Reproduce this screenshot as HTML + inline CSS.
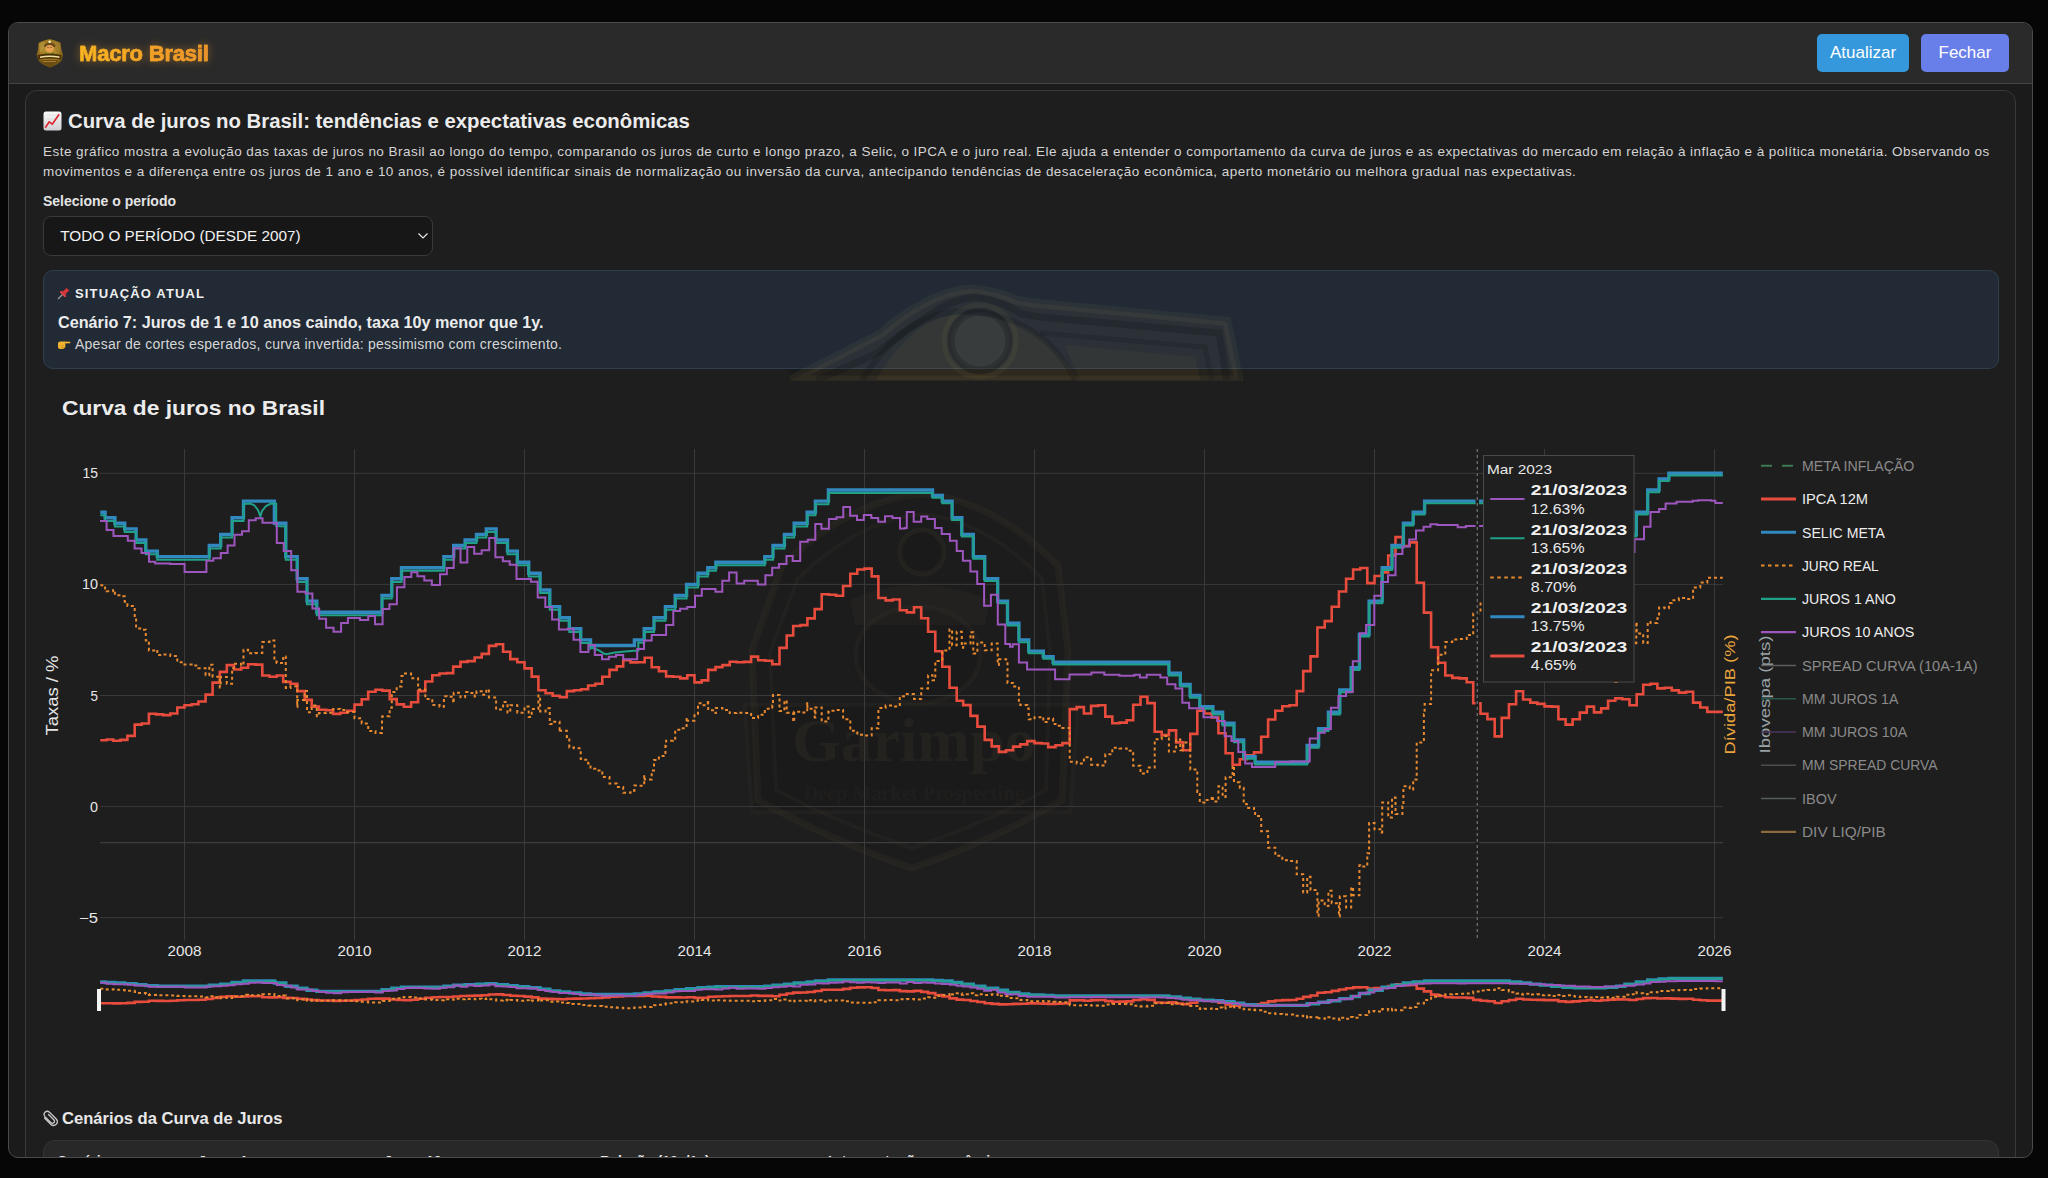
<!DOCTYPE html>
<html><head><meta charset="utf-8"><style>
*{box-sizing:border-box;margin:0;padding:0}
html,body{width:2048px;height:1178px;overflow:hidden;background:#060606;font-family:"Liberation Sans",sans-serif}
.win{position:absolute;left:8px;top:22px;width:2025px;height:1136px;border:1px solid #4a4a4a;border-radius:10px;background:#1b1b1b;overflow:hidden}
.hdr{position:absolute;left:0;top:0;width:2023px;height:61px;background:#2a2a2a;border-bottom:1px solid #444}
.logo{position:absolute;left:27px;top:16px;width:28px;height:30px}
.brand{position:absolute;left:70px;top:17px;font-size:22px;letter-spacing:-0.2px;font-weight:700;line-height:28px;-webkit-text-stroke:0.5px #f0a228;white-space:nowrap;color:#f1a72a;background:linear-gradient(90deg,#f7b820,#ec8f2c);-webkit-background-clip:text;background-clip:text;-webkit-text-fill-color:transparent;filter:drop-shadow(0 0 4px rgba(240,160,40,.45))}
.btn{position:absolute;top:11px;height:38px;border-radius:5px;color:#fff;font-size:17px;line-height:38px;text-align:center;white-space:nowrap}
.b1{left:1808px;width:92px;background:#3598dc}
.b2{left:1912px;width:88px;background:#687ee9}
.card{position:absolute;left:16px;top:67px;width:1991px;height:1200px;border:1px solid #393939;border-radius:12px;background:#1e1e1e}
.abs{position:absolute;white-space:nowrap}
.h1{left:43px;top:109px;font-size:20.35px;font-weight:700;color:#ececec;line-height:24px}
.p{left:43px;top:142px;font-size:13.5px;color:#d4d4d4;line-height:20px;letter-spacing:0.46px}
.lab{left:43px;top:192px;font-size:14px;font-weight:700;color:#e4e4e4;line-height:18px}
.sel{left:43px;top:216px;width:390px;height:40px;border:1px solid #3a3a3a;border-radius:8px;background:#171717}
.seltxt{left:60.3px;top:226.7px;font-size:15.3px;color:#f2f2f2;line-height:18px}
.sit{left:42.5px;top:269.5px;width:1956px;height:99px;border:1px solid #2f3e4d;border-radius:10px;background:#212a35;overflow:hidden}
.s1{left:57px;top:284.6px;font-size:13px;font-weight:700;color:#f0f0f0;letter-spacing:1.15px;line-height:18px}
.s2{left:58px;top:312px;font-size:16.2px;font-weight:700;color:#ececec;line-height:20px}
.s3{left:57px;top:335.4px;font-size:14px;color:#d6d6d6;letter-spacing:0.25px;line-height:18px}
.cen{left:42px;top:1108.7px;font-size:16.6px;font-weight:700;color:#e8e8e8;line-height:20px}
.tbl{left:42.5px;top:1140px;width:1956px;height:200px;border:1px solid #343434;border-radius:12px;background:#282828}
.th{top:1152px;font-size:14px;font-weight:700;color:#e8e8e8;line-height:18px}
</style></head><body>
<div class="win">
 <div class="hdr">
  <svg style="position:absolute;left:23px;top:13px" width="36" height="36" viewBox="32 36 36 36">
   <defs><radialGradient id="lg" cx="0.5" cy="0.4" r="0.65"><stop offset="0" stop-color="#d0a034"/><stop offset="0.7" stop-color="#8c6a1c"/><stop offset="1" stop-color="#4e3a10"/></radialGradient></defs>
   <path d="M49.5 39 L55 40.5 L60.5 42.5 L61.5 50 L63 55 L61.5 61 L57 64.5 L50 67.8 L43 64.5 L38.5 61 L36.5 55 L38 50 L38.5 42.5 L44 40.5 Z" fill="url(#lg)"/>
   <path d="M39 44 Q42 41 45 42 L44 50 L40 53 Z" fill="#b89a40" opacity="0.7"/>
   <path d="M60 44 Q57 41 54 42 L55 50 L59 53 Z" fill="#a08030" opacity="0.7"/>
   <path d="M44 45 Q49.5 39.5 55.5 45 L55 47 L44.5 47 Z" fill="#6a4a18"/>
   <circle cx="49.7" cy="41.8" r="1.3" fill="#fff4c8"/>
   <ellipse cx="49.5" cy="48.5" rx="4.2" ry="3.6" fill="#e8a052"/>
   <circle cx="48" cy="47.6" r="0.5" fill="#3a1a08"/><circle cx="51" cy="47.6" r="0.5" fill="#3a1a08"/>
   <path d="M45 52 Q49.5 55 54 52 L54 54.5 L45 54.5 Z" fill="#5a7a28"/>
   <path d="M37.5 55 Q49.5 52.5 61.5 55 L61 59.5 Q49.5 57.5 38 59.5 Z" fill="#4a3008"/>
   <path d="M40 57.2 Q49.5 55.2 59.5 57.2" stroke="#f4e0a0" stroke-width="1.6" fill="none"/>
   <path d="M40.5 60.5 Q49.5 59 58.5 60.5 L56 64 L50 66.5 L44 64 Z" fill="#6a4c14"/>
   <path d="M43 61.5 H56" stroke="#c8a048" stroke-width="0.6"/>
  </svg>
  <div class="brand">Macro Brasil</div>
  <div class="btn b1">Atualizar</div>
  <div class="btn b2">Fechar</div>
 </div>
</div>
<div style="position:absolute;left:0;top:0;width:2048px;height:1158px;overflow:hidden">
<div style="position:absolute;left:9px;top:23px;width:2023px;height:1134px;overflow:hidden;border-radius:0 0 9px 9px">
 <div class="card" style="left:16px;top:67px"></div>
</div>
</div>
<div class="abs h1"><span style="display:inline-block;width:19px;height:20px;vertical-align:-3px;margin-right:6px;position:relative"><svg width="19" height="20" viewBox="0 0 19 20" style="position:absolute;left:0;top:0"><defs><linearGradient id="eg" x1="0" y1="0" x2="0" y2="1"><stop offset="0" stop-color="#fbfbfb"/><stop offset="1" stop-color="#cfcfd4"/></linearGradient></defs><rect x="0.5" y="0.5" width="18" height="19" rx="2.5" fill="url(#eg)"/><path d="M3 4H16M3 8H16M3 12H16M3 16H16" stroke="#dadade" stroke-width="0.6"/><path d="M2.2 16.8 L6.3 10.8 L9.2 13.2 L16.2 3.2" stroke="#de2a30" stroke-width="1.7" fill="none" stroke-linejoin="round"/></svg></span>Curva de juros no Brasil: tendências e expectativas econômicas</div>
<div class="abs p">Este gráfico mostra a evolução das taxas de juros no Brasil ao longo do tempo, comparando os juros de curto e longo prazo, a Selic, o IPCA e o juro real. Ele ajuda a entender o comportamento da curva de juros e as expectativas do mercado em relação à inflação e à política monetária. Observando os<br>movimentos e a diferença entre os juros de 1 ano e 10 anos, é possível identificar sinais de normalização ou inversão da curva, antecipando tendências de desaceleração econômica, aperto monetário ou melhora gradual nas expectativas.</div>
<div class="abs lab">Selecione o período</div>
<div class="abs sel"><svg width="12" height="8" viewBox="0 0 12 8" style="position:absolute;right:3.2px;top:15px"><path d="M1.5 1.5 L6 6 L10.5 1.5" stroke="#e8e8e8" stroke-width="1.2" fill="none"/></svg></div>
<div class="abs seltxt">TODO O PERÍODO (DESDE 2007)</div>
<div class="abs sit"></div>
<svg width="480" height="112" viewBox="780 269 480 112" style="position:absolute;left:780px;top:269px">
 <path d="M789 369 L1241 369 L1241 380 L789 380 Z" fill="rgba(0,0,0,0.1)"/>
 <path d="M791 380 L882 333 Q900 316 923 304 Q948 290 972 289 Q996 291 1016 300 L1028 302.5 L1227 321.5 L1239 380 Z" fill="rgba(200,165,90,0.06)" stroke="rgba(205,180,110,0.065)" stroke-width="9"/>
 <path d="M817 380 L876 354 Q900 334 928 316 Q950 300 975 297 Q1000 300 1022 314 L1040 317 L1219 333 L1227 380" fill="none" stroke="rgba(10,15,20,0.22)" stroke-width="7"/>
 <path d="M876 380 Q905 330 940 318 Q980 306 1030 330 Q1060 350 1080 380 Z" fill="rgba(210,150,60,0.06)"/>
 <path d="M862 380 Q900 320 950 312 Q1010 308 1050 345 Q1065 360 1075 380" fill="none" stroke="rgba(10,15,20,0.2)" stroke-width="6"/>
 <path d="M1040 333 L1205 347 L1212 380" fill="none" stroke="rgba(10,15,20,0.15)" stroke-width="5"/>
 <path d="M1065 345 L1195 357 L1200 380 L1080 380 Z" fill="rgba(210,150,60,0.05)"/>
 <circle cx="980" cy="341" r="36" fill="none" stroke="rgba(205,180,110,0.06)" stroke-width="5"/>
 <circle cx="980" cy="341" r="29" fill="rgba(110,130,150,0.08)" stroke="rgba(10,15,20,0.22)" stroke-width="7"/>
</svg>
<div class="abs s1"><span style="display:inline-block;width:14px;height:14px;margin-right:4px;vertical-align:-2px;letter-spacing:0"><svg width="14" height="14" viewBox="0 0 14 14"><path d="M1 13 L6 8" stroke="#9a9a9a" stroke-width="1.2"/><path d="M5 5.5 L8.5 9 L9.5 7 L11.5 5 L12.8 5.2 L8.8 1.2 L9 2.5 L7 4.5 Z" fill="#d8343a"/><path d="M4 6 L8 10" stroke="#e04048" stroke-width="2.2" stroke-linecap="round"/></svg></span>SITUAÇÃO ATUAL</div>
<div class="abs s2">Cenário 7: Juros de 1 e 10 anos caindo, taxa 10y menor que 1y.</div>
<div class="abs s3"><span style="display:inline-block;width:14px;height:11px;margin-right:4px;vertical-align:-1px"><svg width="14" height="11" viewBox="0 0 14 11"><path d="M1 4.5 Q1 2.5 3.5 2.5 L7 2.5 L13 2.8 Q14 3.5 13 4.3 L8 4.5 L8.5 6 Q8.5 10 5 10 L3 10 Q1 10 1 8 Z" fill="#f2b630"/><path d="M3.5 6.5 L7.5 6.5 M3.5 8.5 L7 8.5" stroke="#c98a1a" stroke-width="0.7"/></svg></span>Apesar de cortes esperados, curva invertida: pessimismo com crescimento.</div>
<svg id="chart" width="2048" height="1178" viewBox="0 0 2048 1178" style="position:absolute;left:0;top:0">
<g fill="none">
 <path d="M782 566 Q850 500 922 494 Q994 500 1058 566 L1068 650 L1062 800 Q990 842 912 868 Q834 842 758 800 L752 650 Z" fill="rgba(0,0,0,0.06)" stroke="rgba(210,180,120,0.045)" stroke-width="7"/>
 <path d="M798 578 Q860 520 922 514 Q984 520 1042 578 L1050 652 L1046 790 Q984 824 912 848 Q840 824 776 790 L770 652 Z" fill="none" stroke="rgba(210,180,120,0.03)" stroke-width="4"/>
 <circle cx="922" cy="552" r="22" fill="rgba(0,0,0,0.05)" stroke="rgba(210,180,120,0.05)" stroke-width="5"/>
 <path d="M850 600 Q915 570 990 600 L985 625 L855 625 Z" fill="rgba(210,180,120,0.03)"/>
 <ellipse cx="918" cy="655" rx="62" ry="48" fill="rgba(0,0,0,0.05)" stroke="rgba(210,180,120,0.035)" stroke-width="5"/>
 <path d="M745 705 L1078 705 L1070 812 L752 812 Z" fill="rgba(0,0,0,0.04)" stroke="rgba(210,180,120,0.035)" stroke-width="4"/>
 <text x="914" y="761" text-anchor="middle" style="font-family:'Liberation Serif',serif;font-weight:700;font-size:62px;fill:rgba(215,185,125,0.055)" textLength="244" lengthAdjust="spacingAndGlyphs">Garimpo</text>
 <text x="914" y="800" text-anchor="middle" style="font-family:'Liberation Serif',serif;font-weight:700;font-size:21px;fill:rgba(215,185,125,0.05)" textLength="221" lengthAdjust="spacingAndGlyphs">Deep Market Prospecting</text>
</g>
<line x1="184.5" y1="449" x2="184.5" y2="940.5" stroke="#3a3a3a" stroke-width="1"/>
<line x1="354.5" y1="449" x2="354.5" y2="940.5" stroke="#3a3a3a" stroke-width="1"/>
<line x1="524.5" y1="449" x2="524.5" y2="940.5" stroke="#3a3a3a" stroke-width="1"/>
<line x1="694.5" y1="449" x2="694.5" y2="940.5" stroke="#3a3a3a" stroke-width="1"/>
<line x1="864.5" y1="449" x2="864.5" y2="940.5" stroke="#3a3a3a" stroke-width="1"/>
<line x1="1034.5" y1="449" x2="1034.5" y2="940.5" stroke="#3a3a3a" stroke-width="1"/>
<line x1="1204.5" y1="449" x2="1204.5" y2="940.5" stroke="#3a3a3a" stroke-width="1"/>
<line x1="1374.5" y1="449" x2="1374.5" y2="940.5" stroke="#3a3a3a" stroke-width="1"/>
<line x1="1544.5" y1="449" x2="1544.5" y2="940.5" stroke="#3a3a3a" stroke-width="1"/>
<line x1="1714.5" y1="449" x2="1714.5" y2="940.5" stroke="#3a3a3a" stroke-width="1"/>
<line x1="100" y1="473.3" x2="1723" y2="473.3" stroke="#3a3a3a" stroke-width="1"/>
<line x1="100" y1="584.4" x2="1723" y2="584.4" stroke="#3a3a3a" stroke-width="1"/>
<line x1="100" y1="695.5" x2="1723" y2="695.5" stroke="#3a3a3a" stroke-width="1"/>
<line x1="100" y1="806.6" x2="1723" y2="806.6" stroke="#3a3a3a" stroke-width="1"/>
<line x1="100" y1="917.7" x2="1723" y2="917.7" stroke="#3a3a3a" stroke-width="1"/>
<line x1="100" y1="842.7" x2="1723" y2="842.7" stroke="#444" stroke-width="1"/>
<g><path d="M100.3 740.2H106.7 V739.5H113.2 V740.8H120.5 V739.9H127.4 V735.9H134.7 V724.6H141.7 V723.5H148.9 V713.7H156.1 V714.4H163.1 V715.1H170.3 V713.5H177.3 V707.5H184.5 V705.3H191.7 V704.2H198.4 V701.5H205.6 V694.6H212.6 V682.6H219.8 V671.9H226.8 V665.1H234.0 V669.5H241.2 V667.7H248.1 V664.2H255.3 V664.6H262.3 V675.5H269.5 V676.8H276.7 V675.5H283.2 V681.9H290.5 V683.7H297.4 V691.1H304.7 V699.9H311.7 V706.6H318.9 V709.7H326.1 V710.2H333.1 V713.9H340.3 V712.8H347.3 V710.8H354.5 V704.6H361.7 V699.3H368.2 V691.7H375.5 V689.7H382.4 V690.6H389.7 V699.1H396.7 V704.4H403.9 V706.8H411.1 V702.2H418.1 V691.1H425.3 V681.5H432.3 V675.3H439.5 V673.5H446.7 V673.1H453.2 V666.6H460.5 V661.9H467.4 V661.1H474.7 V657.5H481.7 V653.9H488.9 V645.9H496.1 V644.2H503.1 V651.7H510.3 V659.1H517.3 V662.2H524.5 V668.4H531.7 V676.6H538.4 V690.2H545.6 V693.3H552.6 V695.7H559.8 V697.3H566.8 V691.1H574.0 V690.2H581.2 V689.3H588.1 V685.5H595.3 V683.7H602.3 V676.8H609.5 V669.9H616.7 V666.4H623.2 V660.2H630.5 V662.4H637.4 V662.2H644.7 V657.7H651.7 V667.3H658.9 V671.3H666.1 V676.4H673.1 V676.8H680.3 V678.4H687.3 V675.3H694.5 V682.4H701.7 V680.4H708.2 V669.9H715.5 V667.1H722.4 V665.1H729.7 V661.7H736.7 V662.2H743.9 V661.9H751.1 V656.6H758.1 V660.2H765.3 V660.8H772.3 V664.2H779.5 V647.9H786.7 V635.5H793.2 V626.0H800.5 V625.1H807.4 V618.4H814.7 V609.1H821.7 V594.2H828.9 V594.8H836.1 V595.7H843.1 V586.0H850.3 V573.7H857.3 V569.5H864.5 V568.6H871.7 V576.4H878.4 V598.0H885.6 V600.4H892.6 V599.5H899.8 V610.2H906.8 V612.4H914.0 V607.3H921.2 V618.2H928.1 V631.7H935.3 V651.3H942.3 V666.8H949.5 V687.7H956.7 V700.8H963.2 V705.1H970.5 V715.9H977.4 V726.6H984.7 V739.9H991.7 V746.4H998.9 V751.9H1006.1 V750.2H1013.1 V746.6H1020.3 V744.4H1027.3 V741.1H1034.5 V743.1H1041.7 V743.5H1048.2 V747.1H1055.5 V745.3H1062.4 V743.1H1069.7 V709.1H1076.7 V707.1H1083.9 V713.5H1091.1 V705.9H1098.1 V705.3H1105.3 V716.6H1112.3 V723.3H1119.5 V722.6H1126.7 V720.2H1133.2 V704.8H1140.5 V696.8H1147.4 V703.1H1154.7 V731.7H1161.7 V735.1H1168.9 V730.4H1176.1 V742.4H1183.1 V750.2H1190.3 V733.9H1197.3 V710.8H1204.5 V713.5H1211.7 V717.5H1218.4 V733.3H1225.6 V753.3H1232.6 V764.8H1239.8 V759.3H1246.8 V755.3H1254.0 V752.4H1261.2 V736.8H1268.1 V719.5H1275.3 V710.8H1282.3 V706.2H1289.5 V705.3H1296.7 V691.1H1303.2 V671.1H1310.5 V656.4H1317.4 V627.5H1324.7 V621.1H1331.7 V606.8H1338.9 V591.5H1346.1 V578.8H1353.1 V569.5H1360.3 V568.0H1367.3 V583.1H1374.5 V576.0H1381.7 V572.4H1388.2 V555.5H1395.5 V537.1H1402.4 V546.0H1409.7 V542.4H1416.7 V582.8H1423.9 V612.6H1431.1 V647.3H1438.1 V662.8H1445.3 V675.5H1452.3 V677.9H1459.5 V678.4H1466.7 V682.2H1473.2 V703.3H1480.5 V713.7H1487.4 V719.1H1494.7 V736.4H1501.7 V717.9H1508.9 V704.2H1516.1 V691.3H1523.1 V699.5H1530.3 V702.6H1537.3 V703.9H1544.5 V706.4H1551.7 V706.6H1558.4 V719.3H1565.6 V724.6H1572.6 V719.3H1579.8 V712.6H1586.8 V706.6H1594.0 V712.4H1601.2 V708.4H1608.1 V700.8H1615.3 V698.4H1622.3 V699.3H1629.5 V705.3H1636.7 V694.2H1643.2 V684.8H1650.5 V683.7H1657.4 V688.4H1664.7 V687.7H1671.7 V690.4H1678.9 V692.6H1686.1 V691.7H1693.1 V702.6H1700.3 V707.5H1707.3 V711.9H1722.8" fill="none" stroke="#e74c3c" stroke-width="2.6" stroke-linejoin="miter" /><path d="M100.3 512.2H105.1 V517.7H114.9 V523.3H124.7 V528.9H136.1 V540.0H145.8 V551.1H157.3 V556.6H209.3 V545.5H220.7 V534.4H232.1 V517.7H243.5 V501.1H274.4 V523.3H285.8 V556.6H297.2 V578.8H307.0 V601.1H316.8 V612.2H382.0 V595.5H391.8 V578.8H401.5 V567.7H443.9 V556.6H453.7 V545.5H465.1 V540.0H476.5 V534.4H486.3 V528.9H496.1 V540.0H507.5 V551.1H517.3 V562.2H528.7 V573.3H540.1 V590.0H549.8 V606.6H559.6 V617.7H569.3 V628.8H580.7 V639.9H590.5 V645.5H634.4 V639.9H644.2 V628.8H654.0 V617.7H665.4 V606.6H675.2 V595.5H686.6 V584.4H698.0 V573.3H707.8 V567.7H715.9 V562.2H764.8 V556.6H773.0 V545.5H784.4 V534.4H794.2 V523.3H807.2 V512.2H815.4 V501.1H828.4 V490.0H932.5 V495.5H942.3 V501.1H952.1 V517.7H961.8 V534.4H973.3 V556.6H984.7 V578.8H997.7 V601.1H1007.5 V623.3H1018.9 V639.9H1028.7 V651.1H1043.3 V656.6H1053.1 V662.2H1168.9 V673.3H1180.3 V684.4H1190.1 V695.5H1199.8 V706.6H1212.9 V712.2H1222.6 V723.3H1234.0 V739.9H1243.7 V756.6H1255.1 V762.2H1307.2 V745.5H1318.6 V728.8H1328.4 V712.2H1339.8 V689.9H1351.2 V667.7H1359.4 V634.4H1369.1 V601.1H1382.2 V567.7H1392.0 V545.5H1403.4 V523.3H1413.2 V512.2H1424.6 V501.1H1509.3 V512.2H1520.7 V523.3H1530.5 V534.4H1540.3 V545.5H1551.7 V556.6H1563.1 V567.7H1574.5 V573.3H1605.3 V567.7H1616.7 V556.6H1624.9 V534.4H1636.3 V512.2H1647.7 V490.0H1659.1 V478.9H1668.9 V473.3H1722.8" fill="none" stroke="#3189bf" stroke-width="3.4" /><path d="M100.3 585.2H105.1 V590.6H106.7 V591.3H113.2 V589.9H114.9 V595.3H120.5 V596.3H124.7 V601.7H127.4 V605.9H134.7 V617.8H136.1 V628.5H141.7 V629.7H145.8 V640.4H148.9 V650.5H156.1 V649.8H157.3 V655.1H163.1 V654.4H170.3 V656.0H177.3 V662.2H184.5 V664.4H191.7 V665.6H198.4 V668.3H205.6 V675.2H209.3 V664.7H212.6 V676.7H219.8 V687.4H220.7 V676.9H226.8 V683.8H232.1 V668.1H234.0 V663.7H241.2 V665.4H243.5 V649.8H248.1 V653.3H255.3 V652.9H262.3 V641.9H269.5 V640.5H274.4 V661.5H276.7 V662.9H283.2 V656.4H285.8 V687.9H290.5 V686.2H297.2 V707.2H297.4 V699.9H304.7 V691.0H307.0 V712.2H311.7 V705.6H316.8 V716.2H318.9 V713.1H326.1 V712.7H333.1 V708.9H340.3 V710.0H347.3 V712.0H354.5 V718.2H361.7 V723.5H368.2 V731.0H375.5 V732.9H382.0 V717.1H382.4 V716.2H389.7 V707.8H391.8 V691.9H396.7 V686.6H401.5 V676.0H403.9 V673.5H411.1 V678.2H418.1 V689.4H425.3 V698.9H432.3 V705.1H439.5 V706.8H443.9 V696.3H446.7 V696.8H453.2 V703.1H453.7 V692.7H460.5 V697.3H465.1 V692.1H467.4 V692.9H474.7 V696.4H476.5 V691.2H481.7 V694.7H486.3 V689.5H488.9 V697.4H496.1 V709.5H503.1 V702.1H507.5 V712.5H510.3 V705.3H517.3 V712.7H524.5 V706.6H528.7 V717.1H531.7 V709.0H538.4 V695.5H540.1 V711.4H545.6 V708.3H549.8 V724.1H552.6 V721.7H559.6 V732.3H559.8 V730.8H566.8 V736.9H569.3 V747.5H574.0 V748.3H580.7 V758.9H581.2 V759.7H588.1 V763.4H590.5 V768.7H595.3 V770.4H602.3 V777.0H609.5 V783.6H616.7 V787.0H623.2 V792.8H630.5 V790.7H634.4 V785.5H637.4 V785.7H644.2 V775.3H644.7 V779.5H651.7 V770.4H654.0 V760.0H658.9 V756.1H665.4 V745.7H666.1 V740.7H673.1 V740.3H675.2 V729.8H680.3 V728.2H686.6 V717.7H687.3 V720.8H694.5 V713.8H698.0 V703.3H701.7 V705.3H707.8 V700.0H708.2 V710.3H715.5 V713.1H715.9 V707.9H722.4 V709.9H729.7 V713.1H736.7 V712.7H743.9 V712.9H751.1 V718.1H758.1 V714.7H764.8 V709.5H765.3 V708.8H772.3 V705.5H773.0 V695.1H779.5 V711.0H784.4 V700.6H786.7 V712.7H793.2 V721.9H794.2 V711.7H800.5 V712.5H807.2 V702.2H807.4 V708.7H814.7 V717.6H815.4 V707.4H821.7 V721.6H828.4 V711.5H828.9 V710.8H836.1 V710.0H843.1 V719.3H850.3 V730.8H857.3 V734.7H864.5 V735.6H871.7 V728.3H878.4 V707.9H885.6 V705.5H892.6 V706.4H899.8 V696.2H906.8 V694.0H914.0 V698.9H921.2 V688.4H928.1 V675.2H932.5 V680.3H935.3 V661.0H942.3 V650.6H949.5 V629.4H952.1 V645.2H956.7 V631.8H961.8 V647.7H963.2 V643.4H970.5 V632.2H973.3 V653.5H977.4 V642.5H984.7 V650.2H991.7 V643.5H997.7 V665.1H998.9 V659.3H1006.1 V661.2H1007.5 V682.9H1013.1 V686.5H1018.9 V702.7H1020.3 V705.0H1027.3 V708.4H1028.7 V719.2H1034.5 V717.2H1041.7 V716.7H1043.3 V722.1H1048.2 V718.5H1053.1 V723.9H1055.5 V725.7H1062.4 V728.0H1069.7 V761.7H1076.7 V763.6H1083.9 V757.3H1091.1 V764.7H1098.1 V765.4H1105.3 V754.3H1112.3 V747.7H1119.5 V748.4H1126.7 V750.8H1133.2 V765.8H1140.5 V773.6H1147.4 V767.5H1154.7 V739.3H1161.7 V736.0H1168.9 V751.4H1176.1 V739.4H1180.3 V750.2H1183.1 V742.5H1190.1 V753.3H1190.3 V769.4H1197.3 V791.9H1199.8 V802.6H1204.5 V800.0H1211.7 V796.1H1212.9 V801.5H1218.4 V786.2H1222.6 V796.9H1225.6 V777.3H1232.6 V765.8H1234.0 V782.2H1239.8 V787.7H1243.7 V804.0H1246.8 V807.9H1254.0 V810.7H1255.1 V816.1H1261.2 V831.2H1268.1 V847.7H1275.3 V855.8H1282.3 V860.2H1289.5 V861.0H1296.7 V874.2H1303.2 V892.5H1307.2 V876.8H1310.5 V890.1H1317.4 V915.8H1318.6 V900.4H1324.7 V906.1H1328.4 V890.7H1331.7 V903.2H1338.9 V916.6H1339.8 V896.3H1346.1 V907.4H1351.2 V887.2H1353.1 V895.3H1359.4 V865.2H1360.3 V866.6H1367.3 V853.2H1369.1 V823.0H1374.5 V829.3H1381.7 V832.5H1382.2 V802.4H1388.2 V817.6H1392.0 V797.6H1395.5 V814.1H1402.4 V806.2H1403.4 V786.3H1409.7 V789.5H1413.2 V779.6H1416.7 V742.4H1423.9 V714.2H1424.6 V704.0H1431.1 V670.2H1438.1 V654.7H1445.3 V641.9H1452.3 V639.4H1459.5 V639.0H1466.7 V635.1H1473.2 V613.4H1480.5 V602.5H1487.4 V596.9H1494.7 V578.5H1501.7 V598.1H1508.9 V612.5H1509.3 V623.1H1516.1 V636.3H1520.7 V646.9H1523.1 V638.5H1530.3 V635.3H1530.5 V645.9H1537.3 V644.5H1540.3 V655.2H1544.5 V652.7H1551.7 V663.1H1558.4 V650.1H1563.1 V660.8H1565.6 V655.3H1572.6 V660.8H1574.5 V666.1H1579.8 V672.9H1586.8 V679.0H1594.0 V673.2H1601.2 V677.2H1605.3 V671.9H1608.1 V679.5H1615.3 V682.0H1616.7 V671.4H1622.3 V670.5H1624.9 V649.3H1629.5 V643.2H1636.3 V621.9H1636.7 V633.4H1643.2 V642.9H1647.7 V621.9H1650.5 V623.0H1657.4 V618.2H1659.1 V607.6H1664.7 V608.3H1668.9 V603.1H1671.7 V600.3H1678.9 V598.0H1686.1 V598.9H1693.1 V587.5H1700.3 V582.4H1707.3 V577.7H1722.8" fill="none" stroke="#e8892f" stroke-width="2" stroke-dasharray="3 3" /><path d="M100.3 515.3 L105.1 515.3 L105.1 520.9 L114.9 520.9 L114.9 526.4 L124.7 526.4 L124.7 532.0 L136.1 532.0 L136.1 543.1 L145.8 543.1 L145.8 554.2 L157.3 554.2 L157.3 559.7 L209.3 559.7 L209.3 548.6 L220.7 548.6 L220.7 537.5 L232.1 537.5 L232.1 520.9 L243.5 520.9 L243.5 504.2 L244.0 504.0 L250.0 503.5 L254.0 505.0 L258.0 510.0 L260.4 516.5 L262.0 511.0 L266.0 506.0 L271.0 503.5 L276.2 503.8 L276.2 526.0 L285.8 526.4 L285.8 559.7 L297.2 559.7 L297.2 582.0 L307.0 582.0 L307.0 604.2 L316.8 604.2 L316.8 615.3 L382.0 615.3 L382.0 598.6 L391.8 598.6 L391.8 582.0 L401.5 582.0 L401.5 570.8 L443.9 570.8 L443.9 559.7 L453.7 559.7 L453.7 548.6 L465.1 548.6 L465.1 543.1 L476.5 543.1 L476.5 537.5 L486.3 537.5 L486.3 532.0 L496.1 532.0 L496.1 543.1 L507.5 543.1 L507.5 554.2 L517.3 554.2 L517.3 565.3 L528.7 565.3 L528.7 576.4 L540.1 576.4 L540.1 593.1 L549.8 593.1 L549.8 609.7 L559.6 609.7 L559.6 620.8 L569.3 620.8 L569.3 632.0 L580.7 632.0 L580.7 643.1 L590.5 643.1 L590.5 648.6 L592.0 647.8 L598.0 650.0 L604.0 653.5 L606.0 654.2 L615.0 652.5 L625.0 651.5 L634.0 650.8 L638.3 650.5 L638.3 642.3 L644.2 643.1 L644.2 632.0 L654.0 632.0 L654.0 620.8 L665.4 620.8 L665.4 609.7 L675.2 609.7 L675.2 598.6 L686.6 598.6 L686.6 587.5 L698.0 587.5 L698.0 576.4 L707.8 576.4 L707.8 570.8 L715.9 570.8 L715.9 565.3 L764.8 565.3 L764.8 559.7 L773.0 559.7 L773.0 548.6 L784.4 548.6 L784.4 537.5 L794.2 537.5 L794.2 526.4 L807.2 526.4 L807.2 515.3 L815.4 515.3 L815.4 504.2 L828.4 504.2 L828.4 493.1 L932.5 493.1 L932.5 497.7 L942.3 497.7 L942.3 503.3 L952.1 503.3 L952.1 520.0 L961.8 520.0 L961.8 536.6 L973.3 536.6 L973.3 558.8 L984.7 558.8 L984.7 581.1 L997.7 581.1 L997.7 603.3 L1007.5 603.3 L1007.5 625.5 L1018.9 625.5 L1018.9 642.2 L1028.7 642.2 L1028.7 653.3 L1043.3 653.3 L1043.3 658.8 L1053.1 658.8 L1053.1 664.4 L1168.9 664.4 L1168.9 675.5 L1180.3 675.5 L1180.3 686.6 L1190.1 686.6 L1190.1 697.7 L1199.8 697.7 L1199.8 708.8 L1212.9 708.8 L1212.9 714.4 L1222.6 714.4 L1222.6 725.5 L1234.0 725.5 L1234.0 742.2 L1243.7 742.2 L1243.7 758.8 L1255.1 758.8 L1255.1 764.4 L1307.2 764.4 L1307.2 747.7 L1318.6 747.7 L1318.6 731.1 L1328.4 731.1 L1328.4 714.4 L1339.8 714.4 L1339.8 692.2 L1351.2 692.2 L1351.2 669.9 L1359.4 669.9 L1359.4 636.6 L1369.1 636.6 L1369.1 603.3 L1382.2 603.3 L1382.2 570.0 L1392.0 570.0 L1392.0 547.7 L1403.4 547.7 L1403.4 525.5 L1413.2 525.5 L1413.2 514.4 L1424.6 514.4 L1424.6 503.3 L1509.3 503.3 L1509.3 514.4 L1520.7 514.4 L1520.7 525.5 L1530.5 525.5 L1530.5 536.6 L1540.3 536.6 L1540.3 547.7 L1551.7 547.7 L1551.7 558.8 L1563.1 558.8 L1563.1 570.0 L1574.5 570.0 L1574.5 575.5 L1605.3 575.5 L1605.3 570.0 L1616.7 570.0 L1616.7 558.8 L1624.9 558.8 L1624.9 536.6 L1636.3 536.6 L1636.3 514.4 L1647.7 514.4 L1647.7 492.2 L1659.1 492.2 L1659.1 481.1 L1668.9 481.1 L1668.9 475.5 L1722.8 475.5" fill="none" stroke="#21a189" stroke-width="2" /><path d="M100.0 521.0H106.6 V529.9H113.5 V536.1H127.8 V540.8H134.6 V548.4H141.5 V553.1H149.0 V561.8H155.2 V563.4H170.2 V564.1H184.6 V571.9H206.4 V560.7H213.3 V558.2H220.8 V553.1H227.6 V545.4H234.5 V534.7H242.0 V531.3H248.8 V520.3H255.7 V518.3H262.5 V522.7H276.8 V542.9H283.7 V551.1H291.2 V570.2H297.4 V591.8H305.6 V593.5H312.4 V608.5H319.2 V618.8H326.1 V627.7H333.6 V631.8H341.1 V622.9H347.9 V618.1H360.0 V620.1H368.2 V616.0H375.0 V624.2H382.6 V609.1H389.4 V604.3H396.9 V587.2H404.4 V577.0H411.3 V572.2H417.4 V576.3H424.3 V580.4H431.8 V584.9H440.0 V574.3H446.8 V568.1H453.7 V548.3H460.5 V562.6H467.3 V546.9H474.2 V553.8H481.7 V550.3H489.2 V538.0H495.4 V557.2H502.9 V561.3H509.7 V564.7H516.5 V579.0H530.9 V581.8H537.7 V597.5H545.3 V607.1H552.1 V619.4H558.9 V629.6H567.6 V628.8H573.6 V639.8H580.4 V652.1H588.4 V644.9H594.8 V654.9H602.0 V659.3H608.8 V656.8H616.0 V655.1H623.2 V659.3H637.2 V649.1H644.0 V640.6H651.7 V635.1H666.1 V624.9H673.3 V610.9H680.1 V608.8H687.3 V607.1H695.0 V595.7H700.0 V595.8H701.8 V588.9H715.5 V591.7H722.3 V580.7H729.1 V572.5H736.6 V583.5H744.2 V580.7H757.8 V584.6H765.4 V575.3H772.2 V567.8H779.0 V564.1H786.5 V555.9H792.7 V560.9H800.2 V541.8H807.7 V539.7H815.3 V524.0H821.4 V528.8H828.9 V518.9H836.5 V517.2H843.3 V506.9H850.1 V515.8H857.0 V519.9H863.8 V515.1H871.3 V517.9H878.2 V521.7H885.0 V516.2H892.5 V517.9H900.0 V528.5H905.0 V527.9H906.8 V512.1H913.7 V521.7H921.2 V516.6H927.3 V519.0H934.9 V527.9H941.7 V534.0H949.9 V540.8H956.7 V551.1H962.9 V560.7H970.4 V571.6H977.2 V583.9H984.1 V605.8H990.9 V594.8H997.8 V624.5H1005.3 V644.1H1010.0 V646.7H1012.7 V644.3H1018.9 V662.4H1027.1 V669.5H1055.1 V679.2H1069.5 V674.4H1091.4 V672.6H1104.3 V674.7H1119.4 V675.8H1134.4 V674.7H1139.9 V677.4H1146.7 V674.7H1160.4 V677.4H1167.2 V684.3H1175.4 V688.4H1182.3 V702.7H1189.1 V708.2H1203.5 V717.3H1217.1 V720.9H1224.7 V736.2H1231.5 V741.0H1238.3 V751.9H1245.2 V763.6H1252.0 V767.0H1275.2 V761.9H1290.0 V761.4H1309.7 V738.4H1317.9 V732.7H1324.8 V728.9H1330.9 V707.7H1338.4 V696.1H1346.0 V692.0H1352.8 V661.2H1360.0 V633.3H1366.1 V625.1H1374.3 V595.7H1381.2 V582.0H1388.0 V575.2H1395.5 V554.0H1402.4 V546.5H1409.2 V539.6H1416.0 V530.4H1423.6 V526.7H1430.4 V524.3H1437.2 V525.0H1457.7 V527.3H1465.9 V526.0H1510.0 V531.0H1530.0 V536.0H1545.0 V545.0H1560.0 V553.0H1575.0 V560.0H1590.0 V566.0H1605.0 V560.0H1620.0 V552.0H1634.5 V539.2H1644.0 V526.8H1650.5 V512.1H1659.1 V508.9H1665.6 V503.4H1676.5 V501.7H1692.7 V500.8H1698.1 V500.2H1711.1 V500.8H1715.4 V503.0H1722.8" fill="none" stroke="#9d56be" stroke-width="2" /></g>
<g transform="translate(0 934.3) scale(1 0.0932)"><path d="M100.3 740.2H106.7 V739.5H113.2 V740.8H120.5 V739.9H127.4 V735.9H134.7 V724.6H141.7 V723.5H148.9 V713.7H156.1 V714.4H163.1 V715.1H170.3 V713.5H177.3 V707.5H184.5 V705.3H191.7 V704.2H198.4 V701.5H205.6 V694.6H212.6 V682.6H219.8 V671.9H226.8 V665.1H234.0 V669.5H241.2 V667.7H248.1 V664.2H255.3 V664.6H262.3 V675.5H269.5 V676.8H276.7 V675.5H283.2 V681.9H290.5 V683.7H297.4 V691.1H304.7 V699.9H311.7 V706.6H318.9 V709.7H326.1 V710.2H333.1 V713.9H340.3 V712.8H347.3 V710.8H354.5 V704.6H361.7 V699.3H368.2 V691.7H375.5 V689.7H382.4 V690.6H389.7 V699.1H396.7 V704.4H403.9 V706.8H411.1 V702.2H418.1 V691.1H425.3 V681.5H432.3 V675.3H439.5 V673.5H446.7 V673.1H453.2 V666.6H460.5 V661.9H467.4 V661.1H474.7 V657.5H481.7 V653.9H488.9 V645.9H496.1 V644.2H503.1 V651.7H510.3 V659.1H517.3 V662.2H524.5 V668.4H531.7 V676.6H538.4 V690.2H545.6 V693.3H552.6 V695.7H559.8 V697.3H566.8 V691.1H574.0 V690.2H581.2 V689.3H588.1 V685.5H595.3 V683.7H602.3 V676.8H609.5 V669.9H616.7 V666.4H623.2 V660.2H630.5 V662.4H637.4 V662.2H644.7 V657.7H651.7 V667.3H658.9 V671.3H666.1 V676.4H673.1 V676.8H680.3 V678.4H687.3 V675.3H694.5 V682.4H701.7 V680.4H708.2 V669.9H715.5 V667.1H722.4 V665.1H729.7 V661.7H736.7 V662.2H743.9 V661.9H751.1 V656.6H758.1 V660.2H765.3 V660.8H772.3 V664.2H779.5 V647.9H786.7 V635.5H793.2 V626.0H800.5 V625.1H807.4 V618.4H814.7 V609.1H821.7 V594.2H828.9 V594.8H836.1 V595.7H843.1 V586.0H850.3 V573.7H857.3 V569.5H864.5 V568.6H871.7 V576.4H878.4 V598.0H885.6 V600.4H892.6 V599.5H899.8 V610.2H906.8 V612.4H914.0 V607.3H921.2 V618.2H928.1 V631.7H935.3 V651.3H942.3 V666.8H949.5 V687.7H956.7 V700.8H963.2 V705.1H970.5 V715.9H977.4 V726.6H984.7 V739.9H991.7 V746.4H998.9 V751.9H1006.1 V750.2H1013.1 V746.6H1020.3 V744.4H1027.3 V741.1H1034.5 V743.1H1041.7 V743.5H1048.2 V747.1H1055.5 V745.3H1062.4 V743.1H1069.7 V709.1H1076.7 V707.1H1083.9 V713.5H1091.1 V705.9H1098.1 V705.3H1105.3 V716.6H1112.3 V723.3H1119.5 V722.6H1126.7 V720.2H1133.2 V704.8H1140.5 V696.8H1147.4 V703.1H1154.7 V731.7H1161.7 V735.1H1168.9 V730.4H1176.1 V742.4H1183.1 V750.2H1190.3 V733.9H1197.3 V710.8H1204.5 V713.5H1211.7 V717.5H1218.4 V733.3H1225.6 V753.3H1232.6 V764.8H1239.8 V759.3H1246.8 V755.3H1254.0 V752.4H1261.2 V736.8H1268.1 V719.5H1275.3 V710.8H1282.3 V706.2H1289.5 V705.3H1296.7 V691.1H1303.2 V671.1H1310.5 V656.4H1317.4 V627.5H1324.7 V621.1H1331.7 V606.8H1338.9 V591.5H1346.1 V578.8H1353.1 V569.5H1360.3 V568.0H1367.3 V583.1H1374.5 V576.0H1381.7 V572.4H1388.2 V555.5H1395.5 V537.1H1402.4 V546.0H1409.7 V542.4H1416.7 V582.8H1423.9 V612.6H1431.1 V647.3H1438.1 V662.8H1445.3 V675.5H1452.3 V677.9H1459.5 V678.4H1466.7 V682.2H1473.2 V703.3H1480.5 V713.7H1487.4 V719.1H1494.7 V736.4H1501.7 V717.9H1508.9 V704.2H1516.1 V691.3H1523.1 V699.5H1530.3 V702.6H1537.3 V703.9H1544.5 V706.4H1551.7 V706.6H1558.4 V719.3H1565.6 V724.6H1572.6 V719.3H1579.8 V712.6H1586.8 V706.6H1594.0 V712.4H1601.2 V708.4H1608.1 V700.8H1615.3 V698.4H1622.3 V699.3H1629.5 V705.3H1636.7 V694.2H1643.2 V684.8H1650.5 V683.7H1657.4 V688.4H1664.7 V687.7H1671.7 V690.4H1678.9 V692.6H1686.1 V691.7H1693.1 V702.6H1700.3 V707.5H1707.3 V711.9H1722.8" fill="none" stroke="#e74c3c" stroke-width="2.6" stroke-linejoin="miter" vector-effect="non-scaling-stroke"/><path d="M100.3 512.2H105.1 V517.7H114.9 V523.3H124.7 V528.9H136.1 V540.0H145.8 V551.1H157.3 V556.6H209.3 V545.5H220.7 V534.4H232.1 V517.7H243.5 V501.1H274.4 V523.3H285.8 V556.6H297.2 V578.8H307.0 V601.1H316.8 V612.2H382.0 V595.5H391.8 V578.8H401.5 V567.7H443.9 V556.6H453.7 V545.5H465.1 V540.0H476.5 V534.4H486.3 V528.9H496.1 V540.0H507.5 V551.1H517.3 V562.2H528.7 V573.3H540.1 V590.0H549.8 V606.6H559.6 V617.7H569.3 V628.8H580.7 V639.9H590.5 V645.5H634.4 V639.9H644.2 V628.8H654.0 V617.7H665.4 V606.6H675.2 V595.5H686.6 V584.4H698.0 V573.3H707.8 V567.7H715.9 V562.2H764.8 V556.6H773.0 V545.5H784.4 V534.4H794.2 V523.3H807.2 V512.2H815.4 V501.1H828.4 V490.0H932.5 V495.5H942.3 V501.1H952.1 V517.7H961.8 V534.4H973.3 V556.6H984.7 V578.8H997.7 V601.1H1007.5 V623.3H1018.9 V639.9H1028.7 V651.1H1043.3 V656.6H1053.1 V662.2H1168.9 V673.3H1180.3 V684.4H1190.1 V695.5H1199.8 V706.6H1212.9 V712.2H1222.6 V723.3H1234.0 V739.9H1243.7 V756.6H1255.1 V762.2H1307.2 V745.5H1318.6 V728.8H1328.4 V712.2H1339.8 V689.9H1351.2 V667.7H1359.4 V634.4H1369.1 V601.1H1382.2 V567.7H1392.0 V545.5H1403.4 V523.3H1413.2 V512.2H1424.6 V501.1H1509.3 V512.2H1520.7 V523.3H1530.5 V534.4H1540.3 V545.5H1551.7 V556.6H1563.1 V567.7H1574.5 V573.3H1605.3 V567.7H1616.7 V556.6H1624.9 V534.4H1636.3 V512.2H1647.7 V490.0H1659.1 V478.9H1668.9 V473.3H1722.8" fill="none" stroke="#3189bf" stroke-width="3.4" vector-effect="non-scaling-stroke"/><path d="M100.3 585.2H105.1 V590.6H106.7 V591.3H113.2 V589.9H114.9 V595.3H120.5 V596.3H124.7 V601.7H127.4 V605.9H134.7 V617.8H136.1 V628.5H141.7 V629.7H145.8 V640.4H148.9 V650.5H156.1 V649.8H157.3 V655.1H163.1 V654.4H170.3 V656.0H177.3 V662.2H184.5 V664.4H191.7 V665.6H198.4 V668.3H205.6 V675.2H209.3 V664.7H212.6 V676.7H219.8 V687.4H220.7 V676.9H226.8 V683.8H232.1 V668.1H234.0 V663.7H241.2 V665.4H243.5 V649.8H248.1 V653.3H255.3 V652.9H262.3 V641.9H269.5 V640.5H274.4 V661.5H276.7 V662.9H283.2 V656.4H285.8 V687.9H290.5 V686.2H297.2 V707.2H297.4 V699.9H304.7 V691.0H307.0 V712.2H311.7 V705.6H316.8 V716.2H318.9 V713.1H326.1 V712.7H333.1 V708.9H340.3 V710.0H347.3 V712.0H354.5 V718.2H361.7 V723.5H368.2 V731.0H375.5 V732.9H382.0 V717.1H382.4 V716.2H389.7 V707.8H391.8 V691.9H396.7 V686.6H401.5 V676.0H403.9 V673.5H411.1 V678.2H418.1 V689.4H425.3 V698.9H432.3 V705.1H439.5 V706.8H443.9 V696.3H446.7 V696.8H453.2 V703.1H453.7 V692.7H460.5 V697.3H465.1 V692.1H467.4 V692.9H474.7 V696.4H476.5 V691.2H481.7 V694.7H486.3 V689.5H488.9 V697.4H496.1 V709.5H503.1 V702.1H507.5 V712.5H510.3 V705.3H517.3 V712.7H524.5 V706.6H528.7 V717.1H531.7 V709.0H538.4 V695.5H540.1 V711.4H545.6 V708.3H549.8 V724.1H552.6 V721.7H559.6 V732.3H559.8 V730.8H566.8 V736.9H569.3 V747.5H574.0 V748.3H580.7 V758.9H581.2 V759.7H588.1 V763.4H590.5 V768.7H595.3 V770.4H602.3 V777.0H609.5 V783.6H616.7 V787.0H623.2 V792.8H630.5 V790.7H634.4 V785.5H637.4 V785.7H644.2 V775.3H644.7 V779.5H651.7 V770.4H654.0 V760.0H658.9 V756.1H665.4 V745.7H666.1 V740.7H673.1 V740.3H675.2 V729.8H680.3 V728.2H686.6 V717.7H687.3 V720.8H694.5 V713.8H698.0 V703.3H701.7 V705.3H707.8 V700.0H708.2 V710.3H715.5 V713.1H715.9 V707.9H722.4 V709.9H729.7 V713.1H736.7 V712.7H743.9 V712.9H751.1 V718.1H758.1 V714.7H764.8 V709.5H765.3 V708.8H772.3 V705.5H773.0 V695.1H779.5 V711.0H784.4 V700.6H786.7 V712.7H793.2 V721.9H794.2 V711.7H800.5 V712.5H807.2 V702.2H807.4 V708.7H814.7 V717.6H815.4 V707.4H821.7 V721.6H828.4 V711.5H828.9 V710.8H836.1 V710.0H843.1 V719.3H850.3 V730.8H857.3 V734.7H864.5 V735.6H871.7 V728.3H878.4 V707.9H885.6 V705.5H892.6 V706.4H899.8 V696.2H906.8 V694.0H914.0 V698.9H921.2 V688.4H928.1 V675.2H932.5 V680.3H935.3 V661.0H942.3 V650.6H949.5 V629.4H952.1 V645.2H956.7 V631.8H961.8 V647.7H963.2 V643.4H970.5 V632.2H973.3 V653.5H977.4 V642.5H984.7 V650.2H991.7 V643.5H997.7 V665.1H998.9 V659.3H1006.1 V661.2H1007.5 V682.9H1013.1 V686.5H1018.9 V702.7H1020.3 V705.0H1027.3 V708.4H1028.7 V719.2H1034.5 V717.2H1041.7 V716.7H1043.3 V722.1H1048.2 V718.5H1053.1 V723.9H1055.5 V725.7H1062.4 V728.0H1069.7 V761.7H1076.7 V763.6H1083.9 V757.3H1091.1 V764.7H1098.1 V765.4H1105.3 V754.3H1112.3 V747.7H1119.5 V748.4H1126.7 V750.8H1133.2 V765.8H1140.5 V773.6H1147.4 V767.5H1154.7 V739.3H1161.7 V736.0H1168.9 V751.4H1176.1 V739.4H1180.3 V750.2H1183.1 V742.5H1190.1 V753.3H1190.3 V769.4H1197.3 V791.9H1199.8 V802.6H1204.5 V800.0H1211.7 V796.1H1212.9 V801.5H1218.4 V786.2H1222.6 V796.9H1225.6 V777.3H1232.6 V765.8H1234.0 V782.2H1239.8 V787.7H1243.7 V804.0H1246.8 V807.9H1254.0 V810.7H1255.1 V816.1H1261.2 V831.2H1268.1 V847.7H1275.3 V855.8H1282.3 V860.2H1289.5 V861.0H1296.7 V874.2H1303.2 V892.5H1307.2 V876.8H1310.5 V890.1H1317.4 V915.8H1318.6 V900.4H1324.7 V906.1H1328.4 V890.7H1331.7 V903.2H1338.9 V916.6H1339.8 V896.3H1346.1 V907.4H1351.2 V887.2H1353.1 V895.3H1359.4 V865.2H1360.3 V866.6H1367.3 V853.2H1369.1 V823.0H1374.5 V829.3H1381.7 V832.5H1382.2 V802.4H1388.2 V817.6H1392.0 V797.6H1395.5 V814.1H1402.4 V806.2H1403.4 V786.3H1409.7 V789.5H1413.2 V779.6H1416.7 V742.4H1423.9 V714.2H1424.6 V704.0H1431.1 V670.2H1438.1 V654.7H1445.3 V641.9H1452.3 V639.4H1459.5 V639.0H1466.7 V635.1H1473.2 V613.4H1480.5 V602.5H1487.4 V596.9H1494.7 V578.5H1501.7 V598.1H1508.9 V612.5H1509.3 V623.1H1516.1 V636.3H1520.7 V646.9H1523.1 V638.5H1530.3 V635.3H1530.5 V645.9H1537.3 V644.5H1540.3 V655.2H1544.5 V652.7H1551.7 V663.1H1558.4 V650.1H1563.1 V660.8H1565.6 V655.3H1572.6 V660.8H1574.5 V666.1H1579.8 V672.9H1586.8 V679.0H1594.0 V673.2H1601.2 V677.2H1605.3 V671.9H1608.1 V679.5H1615.3 V682.0H1616.7 V671.4H1622.3 V670.5H1624.9 V649.3H1629.5 V643.2H1636.3 V621.9H1636.7 V633.4H1643.2 V642.9H1647.7 V621.9H1650.5 V623.0H1657.4 V618.2H1659.1 V607.6H1664.7 V608.3H1668.9 V603.1H1671.7 V600.3H1678.9 V598.0H1686.1 V598.9H1693.1 V587.5H1700.3 V582.4H1707.3 V577.7H1722.8" fill="none" stroke="#e8892f" stroke-width="2" stroke-dasharray="3 3" vector-effect="non-scaling-stroke"/><path d="M100.3 515.3 L105.1 515.3 L105.1 520.9 L114.9 520.9 L114.9 526.4 L124.7 526.4 L124.7 532.0 L136.1 532.0 L136.1 543.1 L145.8 543.1 L145.8 554.2 L157.3 554.2 L157.3 559.7 L209.3 559.7 L209.3 548.6 L220.7 548.6 L220.7 537.5 L232.1 537.5 L232.1 520.9 L243.5 520.9 L243.5 504.2 L244.0 504.0 L250.0 503.5 L254.0 505.0 L258.0 510.0 L260.4 516.5 L262.0 511.0 L266.0 506.0 L271.0 503.5 L276.2 503.8 L276.2 526.0 L285.8 526.4 L285.8 559.7 L297.2 559.7 L297.2 582.0 L307.0 582.0 L307.0 604.2 L316.8 604.2 L316.8 615.3 L382.0 615.3 L382.0 598.6 L391.8 598.6 L391.8 582.0 L401.5 582.0 L401.5 570.8 L443.9 570.8 L443.9 559.7 L453.7 559.7 L453.7 548.6 L465.1 548.6 L465.1 543.1 L476.5 543.1 L476.5 537.5 L486.3 537.5 L486.3 532.0 L496.1 532.0 L496.1 543.1 L507.5 543.1 L507.5 554.2 L517.3 554.2 L517.3 565.3 L528.7 565.3 L528.7 576.4 L540.1 576.4 L540.1 593.1 L549.8 593.1 L549.8 609.7 L559.6 609.7 L559.6 620.8 L569.3 620.8 L569.3 632.0 L580.7 632.0 L580.7 643.1 L590.5 643.1 L590.5 648.6 L592.0 647.8 L598.0 650.0 L604.0 653.5 L606.0 654.2 L615.0 652.5 L625.0 651.5 L634.0 650.8 L638.3 650.5 L638.3 642.3 L644.2 643.1 L644.2 632.0 L654.0 632.0 L654.0 620.8 L665.4 620.8 L665.4 609.7 L675.2 609.7 L675.2 598.6 L686.6 598.6 L686.6 587.5 L698.0 587.5 L698.0 576.4 L707.8 576.4 L707.8 570.8 L715.9 570.8 L715.9 565.3 L764.8 565.3 L764.8 559.7 L773.0 559.7 L773.0 548.6 L784.4 548.6 L784.4 537.5 L794.2 537.5 L794.2 526.4 L807.2 526.4 L807.2 515.3 L815.4 515.3 L815.4 504.2 L828.4 504.2 L828.4 493.1 L932.5 493.1 L932.5 497.7 L942.3 497.7 L942.3 503.3 L952.1 503.3 L952.1 520.0 L961.8 520.0 L961.8 536.6 L973.3 536.6 L973.3 558.8 L984.7 558.8 L984.7 581.1 L997.7 581.1 L997.7 603.3 L1007.5 603.3 L1007.5 625.5 L1018.9 625.5 L1018.9 642.2 L1028.7 642.2 L1028.7 653.3 L1043.3 653.3 L1043.3 658.8 L1053.1 658.8 L1053.1 664.4 L1168.9 664.4 L1168.9 675.5 L1180.3 675.5 L1180.3 686.6 L1190.1 686.6 L1190.1 697.7 L1199.8 697.7 L1199.8 708.8 L1212.9 708.8 L1212.9 714.4 L1222.6 714.4 L1222.6 725.5 L1234.0 725.5 L1234.0 742.2 L1243.7 742.2 L1243.7 758.8 L1255.1 758.8 L1255.1 764.4 L1307.2 764.4 L1307.2 747.7 L1318.6 747.7 L1318.6 731.1 L1328.4 731.1 L1328.4 714.4 L1339.8 714.4 L1339.8 692.2 L1351.2 692.2 L1351.2 669.9 L1359.4 669.9 L1359.4 636.6 L1369.1 636.6 L1369.1 603.3 L1382.2 603.3 L1382.2 570.0 L1392.0 570.0 L1392.0 547.7 L1403.4 547.7 L1403.4 525.5 L1413.2 525.5 L1413.2 514.4 L1424.6 514.4 L1424.6 503.3 L1509.3 503.3 L1509.3 514.4 L1520.7 514.4 L1520.7 525.5 L1530.5 525.5 L1530.5 536.6 L1540.3 536.6 L1540.3 547.7 L1551.7 547.7 L1551.7 558.8 L1563.1 558.8 L1563.1 570.0 L1574.5 570.0 L1574.5 575.5 L1605.3 575.5 L1605.3 570.0 L1616.7 570.0 L1616.7 558.8 L1624.9 558.8 L1624.9 536.6 L1636.3 536.6 L1636.3 514.4 L1647.7 514.4 L1647.7 492.2 L1659.1 492.2 L1659.1 481.1 L1668.9 481.1 L1668.9 475.5 L1722.8 475.5" fill="none" stroke="#21a189" stroke-width="2" vector-effect="non-scaling-stroke"/><path d="M100.0 521.0H106.6 V529.9H113.5 V536.1H127.8 V540.8H134.6 V548.4H141.5 V553.1H149.0 V561.8H155.2 V563.4H170.2 V564.1H184.6 V571.9H206.4 V560.7H213.3 V558.2H220.8 V553.1H227.6 V545.4H234.5 V534.7H242.0 V531.3H248.8 V520.3H255.7 V518.3H262.5 V522.7H276.8 V542.9H283.7 V551.1H291.2 V570.2H297.4 V591.8H305.6 V593.5H312.4 V608.5H319.2 V618.8H326.1 V627.7H333.6 V631.8H341.1 V622.9H347.9 V618.1H360.0 V620.1H368.2 V616.0H375.0 V624.2H382.6 V609.1H389.4 V604.3H396.9 V587.2H404.4 V577.0H411.3 V572.2H417.4 V576.3H424.3 V580.4H431.8 V584.9H440.0 V574.3H446.8 V568.1H453.7 V548.3H460.5 V562.6H467.3 V546.9H474.2 V553.8H481.7 V550.3H489.2 V538.0H495.4 V557.2H502.9 V561.3H509.7 V564.7H516.5 V579.0H530.9 V581.8H537.7 V597.5H545.3 V607.1H552.1 V619.4H558.9 V629.6H567.6 V628.8H573.6 V639.8H580.4 V652.1H588.4 V644.9H594.8 V654.9H602.0 V659.3H608.8 V656.8H616.0 V655.1H623.2 V659.3H637.2 V649.1H644.0 V640.6H651.7 V635.1H666.1 V624.9H673.3 V610.9H680.1 V608.8H687.3 V607.1H695.0 V595.7H700.0 V595.8H701.8 V588.9H715.5 V591.7H722.3 V580.7H729.1 V572.5H736.6 V583.5H744.2 V580.7H757.8 V584.6H765.4 V575.3H772.2 V567.8H779.0 V564.1H786.5 V555.9H792.7 V560.9H800.2 V541.8H807.7 V539.7H815.3 V524.0H821.4 V528.8H828.9 V518.9H836.5 V517.2H843.3 V506.9H850.1 V515.8H857.0 V519.9H863.8 V515.1H871.3 V517.9H878.2 V521.7H885.0 V516.2H892.5 V517.9H900.0 V528.5H905.0 V527.9H906.8 V512.1H913.7 V521.7H921.2 V516.6H927.3 V519.0H934.9 V527.9H941.7 V534.0H949.9 V540.8H956.7 V551.1H962.9 V560.7H970.4 V571.6H977.2 V583.9H984.1 V605.8H990.9 V594.8H997.8 V624.5H1005.3 V644.1H1010.0 V646.7H1012.7 V644.3H1018.9 V662.4H1027.1 V669.5H1055.1 V679.2H1069.5 V674.4H1091.4 V672.6H1104.3 V674.7H1119.4 V675.8H1134.4 V674.7H1139.9 V677.4H1146.7 V674.7H1160.4 V677.4H1167.2 V684.3H1175.4 V688.4H1182.3 V702.7H1189.1 V708.2H1203.5 V717.3H1217.1 V720.9H1224.7 V736.2H1231.5 V741.0H1238.3 V751.9H1245.2 V763.6H1252.0 V767.0H1275.2 V761.9H1290.0 V761.4H1309.7 V738.4H1317.9 V732.7H1324.8 V728.9H1330.9 V707.7H1338.4 V696.1H1346.0 V692.0H1352.8 V661.2H1360.0 V633.3H1366.1 V625.1H1374.3 V595.7H1381.2 V582.0H1388.0 V575.2H1395.5 V554.0H1402.4 V546.5H1409.2 V539.6H1416.0 V530.4H1423.6 V526.7H1430.4 V524.3H1437.2 V525.0H1457.7 V527.3H1465.9 V526.0H1510.0 V531.0H1530.0 V536.0H1545.0 V545.0H1560.0 V553.0H1575.0 V560.0H1590.0 V566.0H1605.0 V560.0H1620.0 V552.0H1634.5 V539.2H1644.0 V526.8H1650.5 V512.1H1659.1 V508.9H1665.6 V503.4H1676.5 V501.7H1692.7 V500.8H1698.1 V500.2H1711.1 V500.8H1715.4 V503.0H1722.8" fill="none" stroke="#9d56be" stroke-width="2" vector-effect="non-scaling-stroke"/></g>
<rect x="97" y="989" width="4" height="22" fill="#f4f4f4"/>
<rect x="1721.5" y="989" width="4" height="22" fill="#f4f4f4"/>
<line x1="1477.3" y1="449" x2="1477.3" y2="940" stroke="#1f1f1f" stroke-width="3.5"/>
<line x1="1477.3" y1="449" x2="1477.3" y2="940" stroke="#6e6e6e" stroke-width="1.3" stroke-dasharray="3 3"/>
<text x="98" y="478.3" text-anchor="end" style="font-family:'Liberation Sans', sans-serif;fill:#e6e6e6;font-size:14px" textLength="15.5" lengthAdjust="spacingAndGlyphs">15</text>
<text x="98" y="589.4" text-anchor="end" style="font-family:'Liberation Sans', sans-serif;fill:#e6e6e6;font-size:14px" textLength="16" lengthAdjust="spacingAndGlyphs">10</text>
<text x="98" y="700.5" text-anchor="end" style="font-family:'Liberation Sans', sans-serif;fill:#e6e6e6;font-size:14px" textLength="7.5" lengthAdjust="spacingAndGlyphs">5</text>
<text x="98" y="811.6" text-anchor="end" style="font-family:'Liberation Sans', sans-serif;fill:#e6e6e6;font-size:14px" textLength="8" lengthAdjust="spacingAndGlyphs">0</text>
<text x="98" y="922.7" text-anchor="end" style="font-family:'Liberation Sans', sans-serif;fill:#e6e6e6;font-size:14px" textLength="19" lengthAdjust="spacingAndGlyphs">−5</text>
<text x="184.5" y="956" text-anchor="middle" style="font-family:'Liberation Sans', sans-serif;fill:#e6e6e6;font-size:14px" textLength="34" lengthAdjust="spacingAndGlyphs">2008</text>
<text x="354.5" y="956" text-anchor="middle" style="font-family:'Liberation Sans', sans-serif;fill:#e6e6e6;font-size:14px" textLength="34" lengthAdjust="spacingAndGlyphs">2010</text>
<text x="524.5" y="956" text-anchor="middle" style="font-family:'Liberation Sans', sans-serif;fill:#e6e6e6;font-size:14px" textLength="34" lengthAdjust="spacingAndGlyphs">2012</text>
<text x="694.5" y="956" text-anchor="middle" style="font-family:'Liberation Sans', sans-serif;fill:#e6e6e6;font-size:14px" textLength="34" lengthAdjust="spacingAndGlyphs">2014</text>
<text x="864.5" y="956" text-anchor="middle" style="font-family:'Liberation Sans', sans-serif;fill:#e6e6e6;font-size:14px" textLength="34" lengthAdjust="spacingAndGlyphs">2016</text>
<text x="1034.5" y="956" text-anchor="middle" style="font-family:'Liberation Sans', sans-serif;fill:#e6e6e6;font-size:14px" textLength="34" lengthAdjust="spacingAndGlyphs">2018</text>
<text x="1204.5" y="956" text-anchor="middle" style="font-family:'Liberation Sans', sans-serif;fill:#e6e6e6;font-size:14px" textLength="34" lengthAdjust="spacingAndGlyphs">2020</text>
<text x="1374.5" y="956" text-anchor="middle" style="font-family:'Liberation Sans', sans-serif;fill:#e6e6e6;font-size:14px" textLength="34" lengthAdjust="spacingAndGlyphs">2022</text>
<text x="1544.5" y="956" text-anchor="middle" style="font-family:'Liberation Sans', sans-serif;fill:#e6e6e6;font-size:14px" textLength="34" lengthAdjust="spacingAndGlyphs">2024</text>
<text x="1714.5" y="956" text-anchor="middle" style="font-family:'Liberation Sans', sans-serif;fill:#e6e6e6;font-size:14px" textLength="34" lengthAdjust="spacingAndGlyphs">2026</text>
<text transform="translate(57.8 695.5) rotate(-90)" text-anchor="middle" style="font-family:'Liberation Sans', sans-serif;fill:#e6e6e6;font-size:16px" textLength="80" lengthAdjust="spacingAndGlyphs">Taxas / %</text>
<text transform="translate(1734.5 694.5) rotate(-90)" text-anchor="middle" style="font-family:'Liberation Sans', sans-serif;fill:#e9a43c;font-size:15px" textLength="120" lengthAdjust="spacingAndGlyphs">Dívida/PIB (%)</text>
<text transform="translate(1769.5 694.5) rotate(-90)" text-anchor="middle" style="font-family:'Liberation Sans', sans-serif;fill:#9aa3a6;font-size:15px" textLength="118" lengthAdjust="spacingAndGlyphs">Ibovespa (pts)</text>
<text x="62" y="415" style="font-family:'Liberation Sans', sans-serif;font-weight:700;fill:#ececec;font-size:20px" textLength="263" lengthAdjust="spacingAndGlyphs">Curva de juros no Brasil</text>
<line x1="1761" y1="465.7" x2="1796" y2="465.7" stroke="#3d7a52" stroke-width="2" stroke-dasharray="11 10"/>
<text x="1802" y="470.9" style="font-family:'Liberation Sans', sans-serif;fill:#8a8a8a;font-size:14px" textLength="112.4" lengthAdjust="spacingAndGlyphs">META INFLAÇÃO</text>
<line x1="1761" y1="499.0" x2="1796" y2="499.0" stroke="#e74c3c" stroke-width="3"/>
<text x="1802" y="504.2" style="font-family:'Liberation Sans', sans-serif;fill:#ededed;font-size:14px" textLength="66" lengthAdjust="spacingAndGlyphs">IPCA 12M</text>
<line x1="1761" y1="532.3" x2="1796" y2="532.3" stroke="#3189bf" stroke-width="3"/>
<text x="1802" y="537.5" style="font-family:'Liberation Sans', sans-serif;fill:#ededed;font-size:14px" textLength="82.8" lengthAdjust="spacingAndGlyphs">SELIC META</text>
<line x1="1761" y1="565.5" x2="1795" y2="565.5" stroke="#e8892f" stroke-width="2.2" stroke-dasharray="3.5 3.5"/>
<text x="1802" y="570.7" style="font-family:'Liberation Sans', sans-serif;fill:#ededed;font-size:14px" textLength="76.7" lengthAdjust="spacingAndGlyphs">JURO REAL</text>
<line x1="1761" y1="598.8" x2="1796" y2="598.8" stroke="#21a189" stroke-width="2.2"/>
<text x="1802" y="604.0" style="font-family:'Liberation Sans', sans-serif;fill:#ededed;font-size:14px" textLength="93.8" lengthAdjust="spacingAndGlyphs">JUROS 1 ANO</text>
<line x1="1761" y1="632.1" x2="1796" y2="632.1" stroke="#9d56be" stroke-width="2.2"/>
<text x="1802" y="637.3" style="font-family:'Liberation Sans', sans-serif;fill:#ededed;font-size:14px" textLength="112.4" lengthAdjust="spacingAndGlyphs">JUROS 10 ANOS</text>
<line x1="1761" y1="665.4" x2="1796" y2="665.4" stroke="#5e5e5e" stroke-width="1.5"/>
<text x="1802" y="670.6" style="font-family:'Liberation Sans', sans-serif;fill:#8a8a8a;font-size:14px" textLength="175.5" lengthAdjust="spacingAndGlyphs">SPREAD CURVA (10A-1A)</text>
<line x1="1761" y1="698.7" x2="1796" y2="698.7" stroke="#27584a" stroke-width="1.5"/>
<text x="1802" y="703.9" style="font-family:'Liberation Sans', sans-serif;fill:#8a8a8a;font-size:14px" textLength="96.3" lengthAdjust="spacingAndGlyphs">MM JUROS 1A</text>
<line x1="1761" y1="731.9" x2="1796" y2="731.9" stroke="#4d3660" stroke-width="1.5"/>
<text x="1802" y="737.1" style="font-family:'Liberation Sans', sans-serif;fill:#8a8a8a;font-size:14px" textLength="105.2" lengthAdjust="spacingAndGlyphs">MM JUROS 10A</text>
<line x1="1761" y1="765.2" x2="1796" y2="765.2" stroke="#4c4c4c" stroke-width="1.5"/>
<text x="1802" y="770.4" style="font-family:'Liberation Sans', sans-serif;fill:#8a8a8a;font-size:14px" textLength="135.6" lengthAdjust="spacingAndGlyphs">MM SPREAD CURVA</text>
<line x1="1761" y1="798.5" x2="1796" y2="798.5" stroke="#555b5e" stroke-width="1.5"/>
<text x="1802" y="803.7" style="font-family:'Liberation Sans', sans-serif;fill:#8a8a8a;font-size:14px" textLength="34.6" lengthAdjust="spacingAndGlyphs">IBOV</text>
<line x1="1761" y1="831.8" x2="1796" y2="831.8" stroke="#8c6a3c" stroke-width="2.2"/>
<text x="1802" y="837.0" style="font-family:'Liberation Sans', sans-serif;fill:#8a8a8a;font-size:14px" textLength="83.8" lengthAdjust="spacingAndGlyphs">DIV LIQ/PIB</text>
<rect x="1483.5" y="455.5" width="150.5" height="226.5" fill="#1f1f1f" stroke="#4a4a4a" stroke-width="1"/>
<text x="1487" y="473.8" style="font-family:'Liberation Sans', sans-serif;fill:#e8e8e8;font-size:13.5px" textLength="65" lengthAdjust="spacingAndGlyphs">Mar 2023</text>
<line x1="1490.3" y1="499.1" x2="1524.5" y2="499.1" stroke="#9d56be" stroke-width="2"/>
<text x="1530.8" y="495.4" style="font-family:'Liberation Sans', sans-serif;font-weight:700;fill:#f0f0f0;font-size:14px" textLength="96.3" lengthAdjust="spacingAndGlyphs">21/03/2023</text>
<text x="1530.8" y="513.8" style="font-family:'Liberation Sans', sans-serif;fill:#e8e8e8;font-size:14px" textLength="53.7" lengthAdjust="spacingAndGlyphs">12.63%</text>
<line x1="1490.3" y1="538.3" x2="1524.5" y2="538.3" stroke="#21a189" stroke-width="2"/>
<text x="1530.8" y="534.5" style="font-family:'Liberation Sans', sans-serif;font-weight:700;fill:#f0f0f0;font-size:14px" textLength="96.3" lengthAdjust="spacingAndGlyphs">21/03/2023</text>
<text x="1530.8" y="552.9" style="font-family:'Liberation Sans', sans-serif;fill:#e8e8e8;font-size:14px" textLength="53.7" lengthAdjust="spacingAndGlyphs">13.65%</text>
<line x1="1490.3" y1="577.5" x2="1523" y2="577.5" stroke="#e8892f" stroke-width="2" stroke-dasharray="3.5 3.5"/>
<text x="1530.8" y="573.6" style="font-family:'Liberation Sans', sans-serif;font-weight:700;fill:#f0f0f0;font-size:14px" textLength="96.3" lengthAdjust="spacingAndGlyphs">21/03/2023</text>
<text x="1530.8" y="592.0" style="font-family:'Liberation Sans', sans-serif;fill:#e8e8e8;font-size:14px" textLength="45.5" lengthAdjust="spacingAndGlyphs">8.70%</text>
<line x1="1490.3" y1="616.7" x2="1524.5" y2="616.7" stroke="#3189bf" stroke-width="3"/>
<text x="1530.8" y="612.7" style="font-family:'Liberation Sans', sans-serif;font-weight:700;fill:#f0f0f0;font-size:14px" textLength="96.3" lengthAdjust="spacingAndGlyphs">21/03/2023</text>
<text x="1530.8" y="631.1" style="font-family:'Liberation Sans', sans-serif;fill:#e8e8e8;font-size:14px" textLength="53.7" lengthAdjust="spacingAndGlyphs">13.75%</text>
<line x1="1490.3" y1="655.9" x2="1524.5" y2="655.9" stroke="#e74c3c" stroke-width="3"/>
<text x="1530.8" y="651.8" style="font-family:'Liberation Sans', sans-serif;font-weight:700;fill:#f0f0f0;font-size:14px" textLength="96.3" lengthAdjust="spacingAndGlyphs">21/03/2023</text>
<text x="1530.8" y="670.2" style="font-family:'Liberation Sans', sans-serif;fill:#e8e8e8;font-size:14px" textLength="45.5" lengthAdjust="spacingAndGlyphs">4.65%</text>
</svg>
<div style="position:absolute;left:0;top:0;width:2048px;height:1157px;overflow:hidden">
<div class="abs cen"><span style="display:inline-block;width:17px;height:18px;margin-right:3px;vertical-align:-3px"><svg width="17" height="18" viewBox="0 0 17 18" style="transform:scaleX(-1)"><path d="M10.5 5.5 L5 11 Q3.8 12.5 5.2 13.8 Q6.5 15 8 13.6 L14 7.6 Q16 5.2 14 3.2 Q11.8 1.2 9.5 3.3 L2.8 10 Q0.3 12.8 2.8 15.3 Q5.5 17.8 8.3 15.2 L14.5 9" stroke="#c8c8c8" stroke-width="1.3" fill="none" stroke-linecap="round"/></svg></span>Cenários da Curva de Juros</div>
<div class="abs tbl"></div>
<div class="abs th" style="left:57px">Cenário</div>
<div class="abs th" style="left:198px">Juros 1 ano</div>
<div class="abs th" style="left:384px">Juros 10 anos</div>
<div class="abs th" style="left:600px">Relação (10a/1a)</div>
<div class="abs th" style="left:828px;letter-spacing:0.6px">Interpretação econômica</div>
</div>
</body></html>
